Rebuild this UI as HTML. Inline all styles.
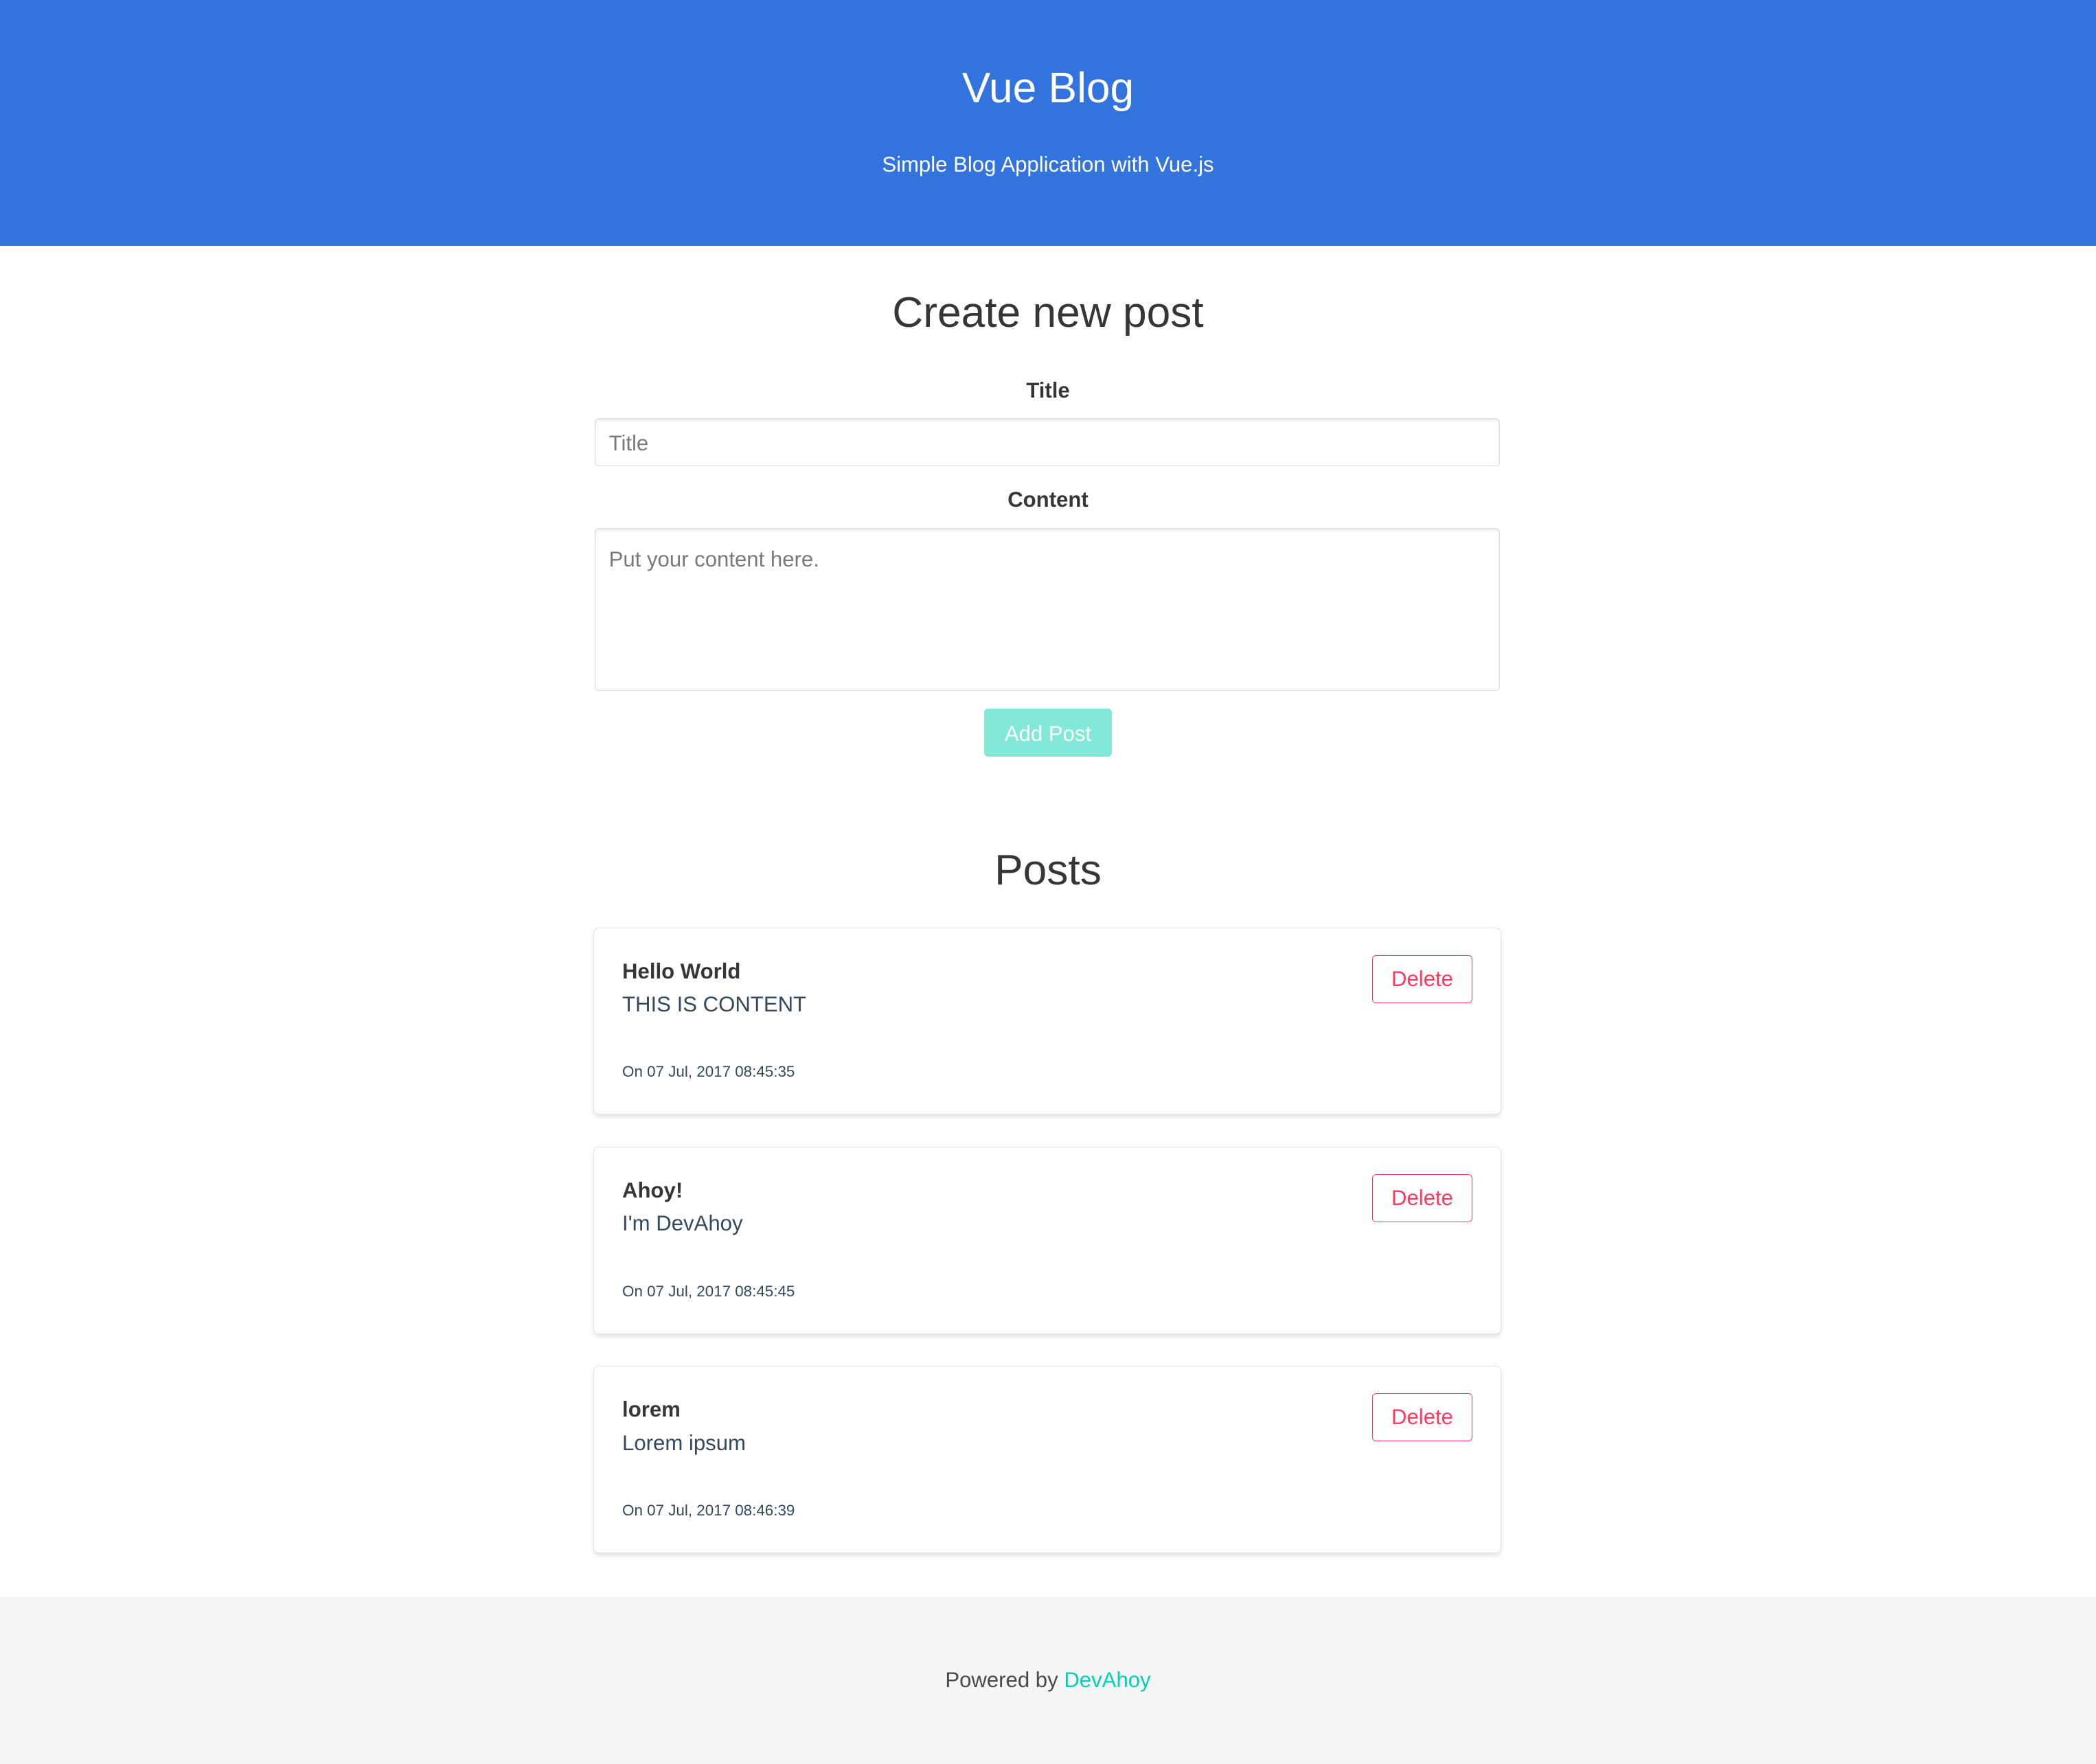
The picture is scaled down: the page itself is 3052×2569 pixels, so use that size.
<!DOCTYPE html>
<html><head><meta charset="utf-8"><style>
html,body{margin:0;padding:0;background:#fff;}
body{width:3052px;height:2568px;overflow:hidden;}
#z{zoom:1.9464;width:1568px;height:1320px;position:relative;font-family:"Liberation Sans",sans-serif;color:#363636;}
.a{position:absolute;left:0;width:1568px;text-align:center;}
.hdr{position:absolute;left:0;top:0;width:1568px;height:184px;background:#3373dd;}
.inp{position:absolute;left:445px;width:676px;border:1px solid #dbdbdb;border-radius:3px;box-shadow:inset 0 1px 2px rgba(10,10,10,.1);background:#fff;color:#7a7a7a;font-size:16px;}
.card{position:absolute;left:444px;width:678px;height:139px;border:1px solid #e4e4e4;border-radius:4px;box-shadow:0 2px 3px rgba(10,10,10,.1);background:#fff;}
.card .t{position:absolute;left:21px;top:23px;font-weight:bold;font-size:16px;color:#363636;}
.card .c{position:absolute;left:21px;top:48px;font-size:16px;color:#34495e;}
.card .d{position:absolute;left:21px;top:101px;font-size:11.5px;color:#34495e;}
.card .b{position:absolute;left:582px;top:20px;width:74px;height:35px;border:1px solid #ff3860;border-radius:3px;color:#ff3860;font-size:16px;line-height:35px;text-align:center;}
</style></head><body><div id="z">
<div class="hdr"></div>
<div class="a" style="top:48px;font-size:32px;color:#fff;font-weight:300;">Vue Blog</div>
<div class="a" style="top:114px;font-size:16px;color:#fff;">Simple Blog Application with Vue.js</div>
<div class="a" style="top:216px;font-size:32px;color:#363636;">Create new post</div>
<div class="a" style="top:283px;font-size:16px;font-weight:bold;">Title</div>
<div class="inp" style="top:313px;height:35px;line-height:37px;"><span style="padding-left:10px">Title</span></div>
<div class="a" style="top:365px;font-size:16px;font-weight:bold;">Content</div>
<div class="inp" style="top:395px;height:121px;"><div style="padding:14px 10px">Put your content here.</div></div>
<div style="position:absolute;left:736px;top:530px;width:96px;height:36px;background:#82e9d9;border-radius:3px;color:#fff;font-size:16px;line-height:38px;text-align:center;">Add Post</div>
<div class="a" style="top:633px;font-size:32px;color:#363636;">Posts</div>
<div class="card" style="top:694px"><div class="t">Hello World</div><div class="c">THIS IS CONTENT</div><div class="d">On 07 Jul, 2017 08:45:35</div><div class="b">Delete</div></div>
<div class="card" style="top:858px"><div class="t">Ahoy!</div><div class="c">I'm DevAhoy</div><div class="d">On 07 Jul, 2017 08:45:45</div><div class="b">Delete</div></div>
<div class="card" style="top:1022px"><div class="t">lorem</div><div class="c">Lorem ipsum</div><div class="d">On 07 Jul, 2017 08:46:39</div><div class="b">Delete</div></div>
<div style="position:absolute;left:0;top:1195px;width:1568px;height:125px;background:#f5f5f5;"></div>
<div class="a" style="top:1248px;font-size:16px;color:#4a4a4a;">Powered by <span style="color:#00d1b2">DevAhoy</span></div>
</div></body></html>
